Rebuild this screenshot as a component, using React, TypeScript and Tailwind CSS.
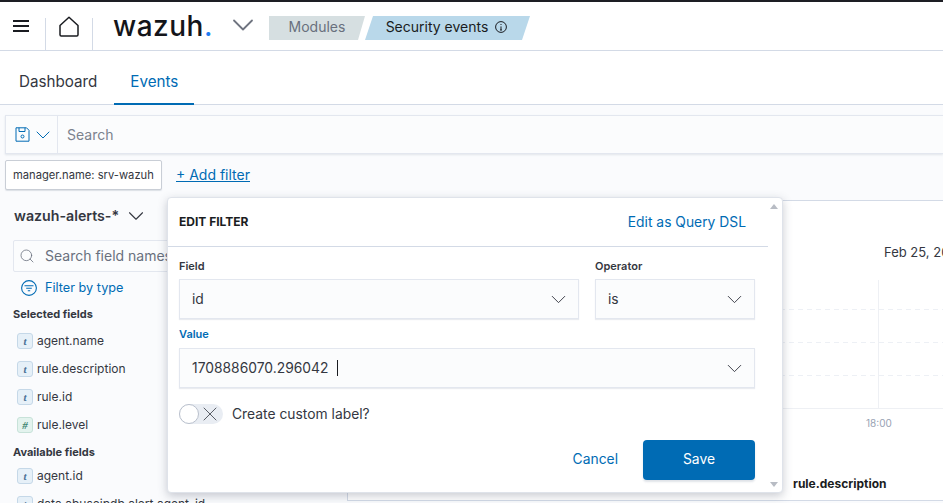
import { ChevronDown, Search, X } from "lucide-react";

const FONT = "font-['Inter','Liberation_Sans',sans-serif]";

function Crumb({ children, active }: { children: React.ReactNode, active?: boolean }) {
    return (
        <div className={`h-6 pb-[2px] flex items-center justify-center text-sm ${active
            ? "w-[165px] pr-[2px] bg-[#b9d8ea] text-[#1a1c21] [clip-path:polygon(8px_0,100%_0,calc(100%-8px)_100%,0_100%)]"
            : "w-[96px] bg-[#d6dfe1] text-[#69707d] [clip-path:polygon(0_0,100%_0,calc(100%-7px)_100%,0_100%)]"}`}>
            {children}
        </div>
    );
}

function TypeBadge({ type }: { type: "t" | "#" }) {
    return (
        <span className={`w-4 h-4 rounded-[3px] border flex items-center justify-center text-[11px] italic font-bold font-['Liberation_Serif',serif] ${type == "t"
            ? "bg-[#e6f0f8] border-[#c5d8e8] text-[#4a7194]"
            : "bg-[#e3f3ee] border-[#c7e2d9] text-[#3d8571]"}`}>{type}</span>
    );
}

function FieldRow({ type, name }: { type: "t" | "#", name: string }) {
    return (
        <div className="flex items-center gap-[4px] pl-[17px] h-4 text-xs text-[#343741]">
            <TypeBadge type={type}/>
            <span className="whitespace-nowrap">{name}</span>
        </div>
    );
}

function Select({ value, caret }: { value: string, caret?: boolean }) {
    return (
        <div className="h-10 bg-[#fbfcfd] border border-[#e3e7ef] shadow-[0_1px_1px_rgba(152,162,179,0.2)] flex items-center justify-between pl-3 pr-[7px] text-[13.85px] text-[#343741]">
            <span className="flex items-center">
                {value}
                {caret ? <span className="ml-[9px] w-px h-4 bg-[#1a1c21]"></span> : <></>}
            </span>
            <ChevronDown size={25} strokeWidth={0.9} className="text-[#343741]"/>
        </div>
    );
}

function FilterPopover() {
    return (
        <div className="absolute left-[167px] top-[195px] w-[616px] h-[296px] bg-white rounded-[4px] border border-[#dfe3ea] shadow-[0_3px_10px_rgba(60,70,90,0.28)] z-10">
            <div className="w-[600px] h-[49px] border-b border-[#d3dae6] flex items-center justify-between pl-[11px] pr-[22px]">
                <span className="text-xs font-bold text-[#1a1c21]">EDIT FILTER</span>
                <span className="text-[13.85px] text-[#006bb4]">Edit as Query DSL</span>
            </div>
            <div className="pl-[11px] pr-[27px] pt-[12px]">
                <div className="flex gap-4">
                    <div className="w-[400px]">
                        <div className="text-[11px] leading-[14px] font-semibold text-[#343741] mb-[6px]">Field</div>
                        <Select value="id"/>
                    </div>
                    <div className="w-[160px]">
                        <div className="text-[11px] leading-[14px] font-semibold text-[#343741] mb-[6px]">Operator</div>
                        <Select value="is"/>
                    </div>
                </div>
                <div className="mt-[8px] text-[11px] leading-[14px] font-semibold text-[#006bb4] mb-[7px]">Value</div>
                <Select value="1708886070.296042" caret/>
                <div className="mt-4 flex items-center gap-[9px]">
                    <div className="w-11 h-5 rounded-full bg-[#e9edf3] flex items-center">
                        <span className="w-5 h-5 rounded-full bg-white border border-[#b9c0cc] shrink-0"></span>
                        <X size={24} strokeWidth={0.8} className="-ml-[1px] text-[#343741]"/>
                    </div>
                    <span className="text-[13.85px] text-[#343741]">Create custom label?</span>
                </div>
                <div className="mt-[15px] flex items-center justify-end">
                    <span className="text-[13.85px] text-[#006bb4] mr-[25px]">Cancel</span>
                    <div className="w-28 h-10 rounded-[4px] bg-[#006bb4] text-white text-[13.85px] flex items-center justify-center shadow-[0_2px_2px_rgba(152,162,179,0.3)]">Save</div>
                </div>
            </div>
            {/* scrollbar arrows */}
            <span className="absolute right-[4px] top-[6px] w-0 h-0 border-x-[4px] border-x-transparent border-b-[5px] border-b-[#b8bcc4]"></span>
            <span className="absolute right-[4px] bottom-[5px] w-0 h-0 border-x-[4px] border-x-transparent border-t-[5px] border-t-[#b8bcc4]"></span>
        </div>
    );
}

function Sidebar() {
    return (
        <div className="w-[347px] shrink-0 pt-[6px] overflow-hidden">
            <div className="pl-[14px] flex items-center gap-[4px] h-[20px] text-[14.2px] font-semibold text-[#343741]">
                wazuh-alerts-*
                <ChevronDown size={26} strokeWidth={1}/>
            </div>
            <div className="ml-[13px] mt-[14px] w-[300px] h-[32px] border border-[#e3e7ef] rounded-[2px] bg-[#fbfcfd] flex items-center pl-[5px] text-sm text-[#69707d]">
                <Search size={16} strokeWidth={1.2} className="mr-[10px] text-[#69707d]"/>
                Search field names
            </div>
            <div className="ml-[21px] mt-[6px] h-5 flex items-center gap-[8px] text-[12.7px] text-[#006bb4]">
                <svg width="16" height="16" viewBox="0 0 16 16" fill="none" stroke="currentColor" strokeWidth="1.1">
                    <circle cx="8" cy="8" r="7.4"/>
                    <path d="M3.5 5.8h9M5.2 8.3h5.6M6.8 10.8h2.4"/>
                </svg>
                Filter by type
            </div>
            <div className="ml-[13px] mt-[8px] text-[11px] leading-4 font-bold text-[#343741]">Selected fields</div>
            <div className="mt-[11px] flex flex-col gap-3">
                <FieldRow type="t" name="agent.name"/>
                <FieldRow type="t" name="rule.description"/>
                <FieldRow type="t" name="rule.id"/>
                <FieldRow type="#" name="rule.level"/>
            </div>
            <div className="ml-[13px] mt-[11px] text-[11px] leading-4 font-bold text-[#343741]">Available fields</div>
            <div className="mt-[8px] flex flex-col gap-3">
                <FieldRow type="t" name="agent.id"/>
                <FieldRow type="t" name="data.abuseipdb.alert.agent_id"/>
            </div>
        </div>
    );
}

function ChartPanel() {
    return (
        <div className="flex-1 h-[301px] bg-white border-l border-y border-[#d3dae6] relative overflow-hidden">
            <div className="absolute left-[536px] top-[42px] text-[13px] whitespace-nowrap text-[#343741]">Feb 25, 2024</div>
            <svg className="absolute left-0 top-[79px]" width="596" height="132" fill="none">
                <path d="M0 29.500H596M0 62.500H596M0 95.500H596" stroke="#edf0f5" strokeDasharray="5 4"/>
                <path d="M530.500 0V128M0 128.500H596" stroke="#eef0f4"/>
            </svg>
            <div className="absolute left-[518px] top-[215px] text-[10px] text-[#98a2b3]">18:00</div>
            <div className="absolute left-[445px] top-[275px] text-xs font-bold text-[#1a1c21]">rule.description</div>
        </div>
    );
}

export default function App() {
    return (
        <div className={`relative w-[943px] h-[503px] overflow-hidden bg-[#fafbfd] border-t-2 border-[#1d1e24] ${FONT}`}>
            <div className="h-[49px] bg-white border-b border-[#d3dae6] flex">
                <div className="w-[45px] pl-[13px] pt-[18px]">
                    <div className="w-[16px] h-[12px] border-y-2 border-[#1a1c21] flex items-center">
                        <div className="w-full h-[2px] bg-[#1a1c21]"></div>
                    </div>
                </div>
                <div className="w-[48px] mt-[16px] border-x border-[#d3dae6] flex justify-center">
                    <svg className="-mt-[2px]" width="22" height="22" viewBox="0 0 22 22" fill="none" stroke="#1a1c21" strokeWidth="1.5">
                        <path d="M2 9.5 11 1.2l9 8.3v9.2a1.2 1.2 0 0 1-1.2 1.2H3.2A1.2 1.2 0 0 1 2 18.700z" strokeLinejoin="round"/>
                    </svg>
                </div>
                <div className="w-[132px] pl-[20px] h-[48px] flex items-center text-[28px] leading-none font-medium tracking-[0.5px] text-[#14151a]">
                    <span>wazuh<span className="text-[#1d7cf2]">.</span></span>
                </div>
                <div className="w-[44px] flex items-center pb-[2px]">
                    <ChevronDown size={36} strokeWidth={1.2} className="text-[#6f7480]"/>
                </div>
                <div className="flex items-start pt-[14px]">
                    <Crumb>Modules</Crumb>
                    <Crumb active>
                        <span>Security events</span>
                        <svg className="ml-[7px]" width="12" height="12" viewBox="0 0 12 12" fill="none" stroke="#1a1c21" strokeWidth="1">
                            <circle cx="6" cy="6" r="5.4"/>
                            <path d="M6 5.400V9M5 9h2M6 3v1"/>
                        </svg>
                    </Crumb>
                </div>
            </div>

            <div className="h-[54px] bg-white border-b border-[#d3dae6] flex pl-[5px]">
                <div className="px-[14px] pt-[20px] h-[54px] text-[15.2px] text-[#343741]">Dashboard</div>
                <div className="ml-[3px] w-[80px] h-[54px] border-b-2 border-[#006bb4] text-center pt-[20px] text-[15.2px] text-[#006bb4]">Events</div>
            </div>

            <div className="mt-[10px] ml-[5px] h-[39px] bg-[#fbfcfd] border border-[#e3e7ef] border-r-0 shadow-[0_1px_2px_rgba(152,162,179,0.25)] flex items-center">
                <div className="w-[52px] h-full border-r border-[#e3e7ef] flex items-center pl-[9px] gap-[1px] text-[#006bb4]">
                    <svg width="15" height="15" viewBox="0 0 15 15" fill="none" stroke="currentColor" strokeWidth="1">
                        <path d="M1 .8h10.500L14 3.300v10.900H1zM4 .8v3.700h6V.8"/>
                        <circle cx="7.500" cy="9.500" r="1.500"/>
                    </svg>
                    <ChevronDown size={24} strokeWidth={1}/>
                </div>
                <span className="pl-[9px] text-sm text-[#7b828e]">Search</span>
            </div>

            <div className="mt-[6px] ml-[5px] flex items-center h-[30px]">
                <div className="w-[157px] h-[30px] bg-white border border-[#c9ced6] rounded-[2px] shadow-[0_1px_1px_rgba(152,162,179,0.3)] flex items-center pl-[7px] text-[11.2px] text-[#343741] whitespace-nowrap overflow-hidden">manager.name: srv-wazuh</div>
                <span className="ml-[14px] text-sm text-[#006bb4] underline">+ Add filter</span>
            </div>

            <div className="flex items-start mt-[10px] h-[312px]">
                <Sidebar/>
                <ChartPanel/>
            </div>

            <FilterPopover/>
        </div>
    );
}
